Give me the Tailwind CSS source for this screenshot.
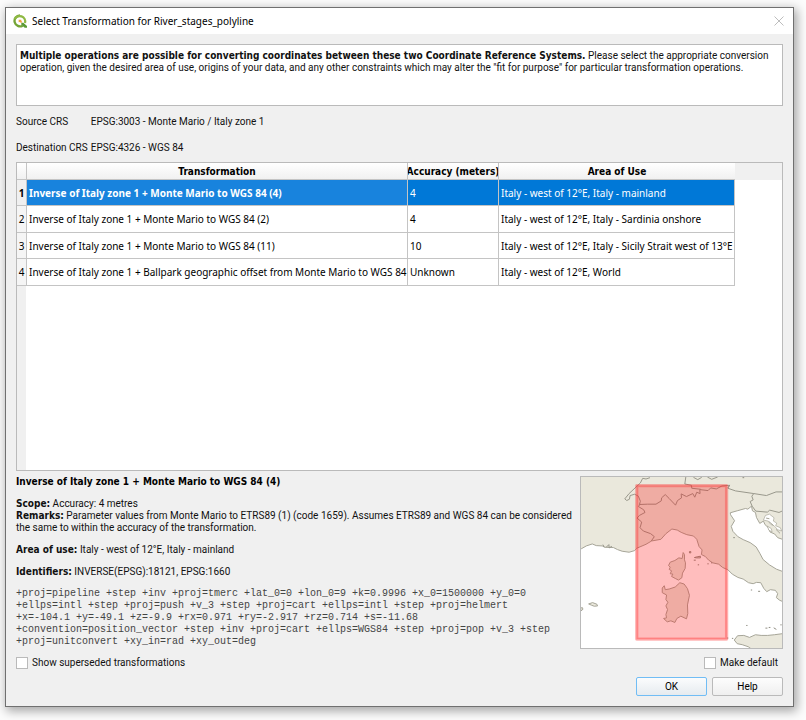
<!DOCTYPE html>
<html lang="en">
<head>
<meta charset="utf-8">
<title>Select Transformation for River_stages_polyline</title>
<script src="https://cdn.jsdelivr.net/npm/@tailwindcss/browser@4"></script>
</head>
<body class="bg-white">
<div class="flex min-h-screen flex-col bg-[#fcfcfc] pt-[7px] pr-[12px] pb-[13px] pl-[5px] font-[Roboto,sans-serif] text-[10px] leading-[12px] text-[#111]">
<main class="flex flex-1 flex-col border border-[#707070] bg-[#f0f0f0] shadow-[2px_3px_10px_1px_rgba(0,0,0,0.35)]">
  <header class="flex h-[26px] items-center bg-white pr-[8px] pl-[7px]">
    <svg class="mr-[5px] size-[14px]" viewBox="0 0 42 42" aria-hidden="true">
      <path d="M21 4a16.500 16.500 0 1 0 8 31" fill="none" stroke="#74a436" stroke-width="7"/>
      <path d="M5 16A16.500 16.500 0 0 1 36 27" fill="none" stroke="#8fb944" stroke-width="7"/>
      <path d="M25 26h6l11 10v5h-7L25 32z" fill="#5b9a35"/>
      <path d="M17 17h8v4l3 3-4 3-3-3-4 1z" fill="#f0a040"/>
    </svg>
    <h1 class="flex-1 font-['Noto_Sans',sans-serif] text-black">Select Transformation for River_stages_polyline</h1>
    <button type="button" aria-label="Close" class="flex size-[12px] items-center justify-center text-[#bdbdbd]">
      <svg class="size-[10px]" viewBox="0 0 10 10" fill="none" stroke="currentColor"><path d="M.5.5l9 9M9.500.5l-9 9"/></svg>
    </button>
  </header>

  <div class="flex flex-1 flex-col px-[10px] pt-[10px] pb-[10px]">
    <section class="h-[62px] border border-[#bababa] bg-white px-[3px] py-[5px]">
      <p><b class="font-['DejaVu_Sans_Condensed','DejaVu_Sans',sans-serif] leading-none">Multiple operations are possible for converting coordinates between these two Coordinate Reference Systems.</b> Please select the appropriate conversion operation, given the desired area of use, origins of your data, and any other constraints which may alter the "fit for purpose" for particular transformation operations.</p>
    </section>

    <dl class="mt-[10px] grid grid-cols-[auto_1fr] gap-x-[3px] gap-y-[14px] whitespace-nowrap">
      <dt>Source CRS</dt><dd>EPSG:3003 - Monte Mario / Italy zone 1</dd>
      <dt>Destination CRS</dt><dd>EPSG:4326 - WGS 84</dd>
    </dl>

    <section class="mt-[8px] flex flex-1 flex-col border border-[#bababa] bg-[linear-gradient(to_right,#f0f0f0_9px,white_9px)]">
      <div class="bg-[linear-gradient(#f0f0f0_17px,transparent_17px)]">
      <table class="w-[718px] table-fixed border-separate border-spacing-0 whitespace-nowrap font-['Noto_Sans',sans-serif]">
        <colgroup><col class="w-[10px]"><col class="w-[381px]"><col class="w-[91px]"><col></colgroup>
        <thead>
          <tr class="h-[17px] bg-linear-to-b from-white to-[#f0f0f0] font-['DejaVu_Sans_Condensed','DejaVu_Sans',sans-serif] text-black">
            <th class="border-r border-b border-[#c4c4c4] p-0"></th>
            <th scope="col" class="border-r border-b border-[#c4c4c4] p-0 pt-[2px]">Transformation</th>
            <th scope="col" class="overflow-hidden border-r border-b border-[#c4c4c4] p-0 pt-[2px]"><div class="flex justify-center overflow-hidden">Accuracy (meters)</div></th>
            <th scope="col" class="border-b border-[#c4c4c4] p-0 pt-[2px]">Area of Use</th>
          </tr>
        </thead>
        <tbody>
          <tr class="h-[26px] bg-[#0078d7] text-white">
            <th scope="row" class="border-r border-b border-[#c4c4c4] bg-[#f0f0f0] p-0 text-black">1</th>
            <td class="border-r border-b border-[#c4c4c4] bg-[#1883dd] px-[2px] font-bold">Inverse of Italy zone 1 + Monte Mario to WGS 84 (4)</td>
            <td class="border-r border-b border-[#c4c4c4] px-[2px]">4</td>
            <td class="border-r border-b border-[#c4c4c4] px-[2px]">Italy - west of 12°E, Italy - mainland</td>
          </tr>
          <tr class="h-[27px] bg-white text-black">
            <th scope="row" class="border-r border-b border-[#c4c4c4] bg-[#f5f5f5] p-0 font-normal">2</th>
            <td class="border-r border-b border-[#c4c4c4] px-[2px]">Inverse of Italy zone 1 + Monte Mario to WGS 84 (2)</td>
            <td class="border-r border-b border-[#c4c4c4] px-[2px]">4</td>
            <td class="border-r border-b border-[#c4c4c4] px-[2px]">Italy - west of 12°E, Italy - Sardinia onshore</td>
          </tr>
          <tr class="h-[26px] bg-white text-black">
            <th scope="row" class="border-r border-b border-[#c4c4c4] bg-[#f5f5f5] p-0 font-normal">3</th>
            <td class="border-r border-b border-[#c4c4c4] px-[2px]">Inverse of Italy zone 1 + Monte Mario to WGS 84 (11)</td>
            <td class="border-r border-b border-[#c4c4c4] px-[2px]">10</td>
            <td class="border-r border-b border-[#c4c4c4] px-[2px]">Italy - west of 12°E, Italy - Sicily Strait west of 13°E</td>
          </tr>
          <tr class="h-[27px] bg-white text-black">
            <th scope="row" class="border-r border-b border-[#c4c4c4] bg-[#f5f5f5] p-0 font-normal">4</th>
            <td class="border-r border-b border-[#c4c4c4] px-[2px]">Inverse of Italy zone 1 + Ballpark geographic offset from Monte Mario to WGS 84</td>
            <td class="border-r border-b border-[#c4c4c4] px-[2px]">Unknown</td>
            <td class="border-r border-b border-[#c4c4c4] px-[2px]">Italy - west of 12°E, World</td>
          </tr>
        </tbody>
      </table>
      </div>
    </section>

    <section class="mt-[5px] flex gap-[6px]">
      <div class="flex min-w-0 flex-1 flex-col gap-[10px] [&_b]:font-['DejaVu_Sans_Condensed','DejaVu_Sans',sans-serif] [&_b]:leading-none">
        <h2 class="font-['DejaVu_Sans_Condensed','DejaVu_Sans',sans-serif] font-bold text-black">Inverse of Italy zone 1 + Monte Mario to WGS 84 (4)</h2>
        <p><b>Scope:</b> Accuracy: 4 metres<br><b>Remarks:</b> Parameter values from Monte Mario to ETRS89 (1) (code 1659). Assumes ETRS89 and WGS 84 can be considered the same to within the accuracy of the transformation.</p>
        <p><b>Area of use:</b> Italy - west of 12°E, Italy - mainland</p>
        <p><b>Identifiers:</b> INVERSE(EPSG):18121, EPSG:1660</p>
        <code class="block pb-[3px] font-['Liberation_Mono',monospace] text-[#444]">+proj=pipeline +step +inv +proj=tmerc +lat_0=0 +lon_0=9 +k=0.9996 +x_0=1500000 +y_0=0<br>+ellps=intl +step +proj=push +v_3 +step +proj=cart +ellps=intl +step +proj=helmert<br>+x=-104.1 +y=-49.1 +z=-9.9 +rx=0.971 +ry=-2.917 +rz=0.714 +s=-11.68<br>+convention=position_vector +step +inv +proj=cart +ellps=WGS84 +step +proj=pop +v_3 +step<br>+proj=unitconvert +xy_in=rad +xy_out=deg</code>
      </div>
      <svg class="h-[173px] w-[203px] border border-[#bababa] bg-white" viewBox="62 48 606 516" preserveAspectRatio="none" role="img" aria-label="Area of use map">
        <g fill="#eae8dc" stroke="#a5a497" stroke-width="3" stroke-linejoin="round">
          <path d="M55 268L64 264 78 256 96 250 108 255 126 256 134 260 160 261 172 267 186 272 207 275 224 270 230 263 258 251 275 241 303 236 318 219 336 205 352 208 364 215 381 222 401 226 411 236 418 258 427 268 425 282 437 288 447 299 459 307 477 311 489 321 505 328 518 341 535 351 551 356 567 367 581 370 591 366 604 367 613 384 622 394 633 388 648 390 655 400 651 412 661 420 675 426V335L651 326 630 313 611 297 601 278 590 259 572 246 551 237 535 228 520 212 515 197 525 180 513 162 512 156 533 150 558 143 565 145 576 136 579 150 588 155 591 170 601 188 612 181 617 192 626 200 632 214 646 220 655 231 675 238V40H55Z"/>
          <path d="M370 276L374 282 374 298 377 307 376 324 368 338 366 352 356 359 346 354 335 348 339 341 331 340 335 331 328 327 331 320 326 315 331 305 345 300 357 292 367 294Z"/>
          <path d="M313 376L307 383 307 397 320 404 318 418 324 426 318 437 323 448 318 463 320 473 311 475 322 485 333 482 345 487 351 475 363 468 380 476 384 460 383 434 389 405 383 385 373 371 360 367 346 380 328 386 316 388Z"/>
          <path d="M524 540L534 527 553 526 570 532 588 524 605 526 625 526 645 524 675 520V570H580L566 560 548 554 533 551Z"/>
          <path d="M85 431L97 427 110 432 112 437 102 438 94 435ZM60 444l6 -2 2 5 -6 5Z"/>
        </g>
        <g fill="none" stroke="#98978b" stroke-width="3" stroke-linejoin="round">
          <path d="M270 50L258 54 248 52 241 66 225 81 207 98 194 114 200 119 208 115 210 104 224 100 235 106 241 121 238 131 262 130 288 130 304 120 305 111 316 101 328 113 347 133 353 119 365 111 364 99 380 107 399 98 405 109 411 94 421 98 420 86 445 89 453 81 470 84 487 75 510 73 505 82 528 90 583 98 621 104 650 93 670 93"/>
          <path d="M378 48L375 69 395 73 396 82 423 85M401 49L414 56 426 49M443 48L456 55 474 48M511 72L505 80"/>
          <path d="M241 129L235 137 251 147 255 155 238 164 231 172 245 184 240 201 250 211 272 219 283 228 274 241"/>
          <path d="M583 98L577 106 581 117 572 122 578 136 589 151 624 154 631 148 659 155 670 150"/>
          <path d="M128 252l4 8M138 260l8-8 1 10 8-5"/>
        </g>
        <path d="M612 178l6-14 12-4 14 11-2 10 10 6-3 8 14 6 4 10-12-4-11-12-10-4-8-10zM624 196l12 8 2 10-10-6z" fill="#fff" stroke="#a5a497" stroke-width="2"/>
        <path d="M620 172l10 2M628 182l14 12M650 206l12 12" fill="none" stroke="#a5a497" stroke-width="3"/>
        <path d="M389 273h4v4h-4zM404 291l8-2 10-2v5h-12zM402 299h6M414 313h4M443 310h4M454 307h4M521 231h5M574 389h4M596 393h6M560 496h4M618 504h6M628 502h5M643 503l8 5M665 492v4M502 534h4M517 535h4M549 50h5" fill="none" stroke="#8f8d82" stroke-width="3"/>
        <rect x="230" y="74" width="271" height="463" fill="#ff0000" fill-opacity=".26"/>
        <rect x="230" y="74" width="271" height="463" fill="none" stroke="#ff3030" stroke-opacity=".35" stroke-width="10" stroke-linejoin="round"/>
        <rect x="230" y="74" width="271" height="463" fill="none" stroke="#ff3030" stroke-opacity=".2" stroke-width="4"/>
      </svg>
    </section>

    <div class="mt-[6px] flex items-center justify-between pr-[5px]">
      <label class="flex items-center gap-[4px]"><input type="checkbox" class="size-[12px] appearance-none border border-[#bababa] bg-white">Show superseded transformations</label>
      <label class="flex items-center gap-[4px]"><input type="checkbox" class="size-[12px] appearance-none border border-[#bababa] bg-white">Make default</label>
    </div>
    <div class="mt-[8px] flex justify-end gap-[5px] text-black">
      <button type="button" class="h-[19px] w-[71px] rounded-[2px] border border-[#71bdf5] bg-linear-to-b from-[#fbfcfd] to-[#e6ebef]">OK</button>
      <button type="button" class="h-[19px] w-[71px] rounded-[2px] border border-[#bababa] bg-linear-to-b from-[#fdfdfd] to-[#efefef]">Help</button>
    </div>
  </div>
</main>
</div>
</body>
</html>
